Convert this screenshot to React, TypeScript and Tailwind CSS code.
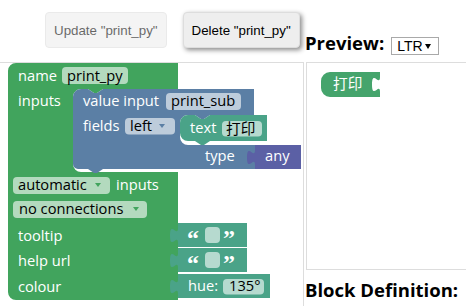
import React from "react";

const F = "'Open Sans', 'Noto Sans CJK SC', sans-serif";
const GREEN = "#41a45d";
const BLUE = "#5b7fa5";
const TEAL = "#4aa388";
const PURPLE = "#5b60a5";

function T({ x, y, children, fill = "#fff", size = 14.67 }: { x: number; y: number; children: React.ReactNode; fill?: string; size?: number }) {
  return (
    <text x={x} y={y} fill={fill} fontFamily={F} fontSize={size}>
      {children}
    </text>
  );
}

function Pill({ x, y, w, h = 17 }: { x: number; y: number; w: number; h?: number }) {
  return <rect x={x} y={y} width={w} height={h} rx={4} ry={4} fill="#fff" fillOpacity={0.6} />;
}

function Quote({ y }: { y: number }) {
  return (
    <g>
      <path d={`M178,${y} H247 V${y + 24} H178 V${y + 20} c0,-10 -8,8 -8,-7.5 s8,2.5 8,-7.5 Z`} fill={TEAL} />
      <text x={187} y={y + 22.5} fill="#fff" fontFamily="'Liberation Serif', serif" fontWeight="bold" fontSize={24}>
        “
      </text>
      <Pill x={205} y={y + 4} w={15} h={16} />
      <text x={223} y={y + 22.5} fill="#fff" fontFamily="'Liberation Serif', serif" fontWeight="bold" fontSize={24}>
        ”
      </text>
    </g>
  );
}

function Workspace() {
  return (
    <svg width={303} height={243} viewBox="0 63 303 243" className="block">
      <path
        d="M8,71 a8,8 0 0 1 8,-8 H178 V89 H103 l-6,4 -3,0 -6,-4 H81 a8,8 0 0 0 -8,8 V164 a8,8 0 0 0 8,8 H178 V300 H16 a8,8 0 0 1 -8,-8 Z"
        fill={GREEN}
      />
      <T x={18} y={81}>name</T>
      <Pill x={62} y={67} w={66} />
      <T x={67} y={81} fill="#000">print_py</T>
      <T x={18} y={106}>inputs</T>

      <path
        d="M73,97 a8,8 0 0 1 8,-8 H88 l6,4 3,0 6,-4 H254 V115 H210 l-6,4 -3,0 -6,-4 H188 a8,8 0 0 0 -8,8 V137 a8,8 0 0 0 8,8 H255 V169 H103 l-6,4 -3,0 -6,-4 H78 a5,5 0 0 1 -5,-5 Z"
        fill={BLUE}
      />
      <T x={83} y={106}>value input</T>
      <Pill x={166} y={93} w={75} />
      <T x={171} y={106} fill="#000">print_sub</T>
      <T x={83} y={131}>fields</T>
      <Pill x={125} y={118} w={50} h={16.5} />
      <T x={130} y={131} fill="#000">left</T>
      <path d="M159,124 h6 l-3,4 Z" fill={BLUE} />
      <T x={205} y={161}>type</T>

      <path
        d="M180,123 a8,8 0 0 1 8,-8 H195 l6,4 3,0 6,-4 H267 V141 H210 l-6,4 -3,0 -6,-4 H188 a8,8 0 0 1 -8,-8 Z"
        fill={TEAL}
      />
      <T x={190} y={133}>text</T>
      <Pill x={222} y={121} w={40} h={15.5} />
      <T x={226} y={134} fill="#000">打印</T>

      <path d="M255,145 H301 V169 H255 V165 c0,-10 -8,8 -8,-7.5 s8,2.5 8,-7.5 Z" fill={PURPLE} />
      <T x={265} y={161}>any</T>

      <Pill x={13} y={177} w={97} />
      <T x={18} y={190} fill="#000">automatic</T>
      <path d="M95,183 h6 l-3,4 Z" fill={GREEN} />
      <T x={116} y={190}>inputs</T>
      <Pill x={13} y={201} w={134} />
      <T x={19} y={214} fill="#000">no connections</T>
      <path d="M133,207 h6 l-3,4 Z" fill={GREEN} />
      <T x={18} y={241}>tooltip</T>
      <T x={18} y={266}>help url</T>
      <T x={18} y={292}>colour</T>

      <Quote y={223} />
      <Quote y={248} />
      <path d="M178,274 H270 V298 H178 V294 c0,-10 -8,8 -8,-7.5 s8,2.5 8,-7.5 Z" fill={TEAL} />
      <T x={188} y={291}>hue:</T>
      <Pill x={223} y={279} w={41} h={15.5} />
      <T x={229} y={291} fill="#000">135°</T>
    </svg>
  );
}

function PreviewBlock() {
  return (
    <svg width={60} height={26} viewBox="320 72 60 26" className="block">
      <path
        d="M329,72 H379 V77 c0,10 -8,-8 -8,7.5 s8,-2.5 8,7.5 V97 H329 a9,9 0 0 1 -9,-9 V81 a9,9 0 0 1 9,-9 Z"
        fill="#45a46c"
      />
      <T x={332} y={89}>打印</T>
    </svg>
  );
}

export default function App() {
  return (
    <div className="relative w-[466px] h-[306px] overflow-hidden bg-white flex">
      <div className="w-[304px] shrink-0 flex flex-col">
        <div className="h-[62px] flex items-start gap-[16px] pt-[12px] pl-[45px] font-['Liberation_Sans',Arial,sans-serif] text-[13.33px] leading-[15px]">
          <button
            disabled
            className="h-[36px] px-[8px] rounded-[4px] border border-[#ddd] bg-[#eee] text-black opacity-60 whitespace-nowrap"
          >
            Update "print_py"
          </button>
          <button className="h-[36px] px-[8px] rounded-[4px] border border-[#ddd] bg-[#eee] text-black shadow-[2px_2px_5px_#888] whitespace-nowrap">
            Delete "print_py"
          </button>
        </div>
        <div className="h-[244px] border-t border-r border-[#ddd] overflow-hidden">
          <Workspace />
        </div>
      </div>
      <div className="flex-1 flex flex-col min-w-0">
        <div className="h-[62px] flex items-start pl-[1px]">
          <h3 className="mt-[32px] leading-[22px] text-[18.5px] font-bold text-black font-['Open_Sans',sans-serif] whitespace-nowrap">
            Preview:
          </h3>
          <div className="mt-[37px] ml-[7px] h-[18px] w-[48px] border border-[#a9a9a9] flex items-center justify-between pl-[5px] pr-[7px] font-['Liberation_Sans',Arial,sans-serif] text-[14px] text-black">
            <span>LTR</span>
            <svg width={6} height={5} viewBox="0 0 6 5">
              <path d="M0,0 H6 L3,5 Z" fill="#000" />
            </svg>
          </div>
        </div>
        <div className="ml-[2px] w-[200px] h-[208px] border border-[#ddd] pt-[9px] pl-[14px]">
          <PreviewBlock />
        </div>
        <h3 className="mt-[9px] pl-[1px] leading-[22px] text-[18.5px] font-bold text-black font-['Open_Sans',sans-serif] whitespace-nowrap">
          Block Definition:
        </h3>
      </div>
    </div>
  );
}
